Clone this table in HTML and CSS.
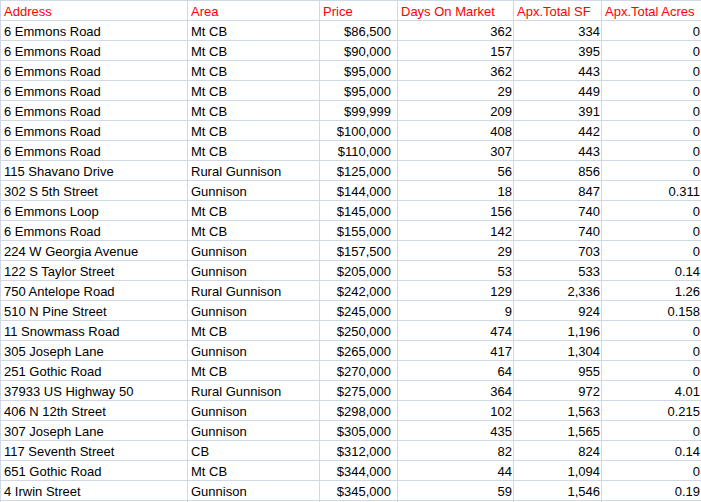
FILE: index.html
```html
<!DOCTYPE html>
<html>
<head>
<meta charset="utf-8">
<link rel="stylesheet" href="styles.css">
</head>
<body>
<table class="sheet">
<colgroup>
<col class="c1"><col class="c2"><col class="c3"><col class="c4"><col class="c5"><col class="c6">
</colgroup>
<thead>
<tr class="head"><td>Address</td><td>Area</td><td>Price</td><td>Days On Market</td><td>Apx.Total SF</td><td>Apx.Total Acres</td></tr>
</thead>
<tbody>
<tr><td>6 Emmons Road</td><td>Mt CB</td><td class="price">$86,500</td><td class="num">362</td><td class="num">334</td><td class="num">0</td></tr>
<tr><td>6 Emmons Road</td><td>Mt CB</td><td class="price">$90,000</td><td class="num">157</td><td class="num">395</td><td class="num">0</td></tr>
<tr><td>6 Emmons Road</td><td>Mt CB</td><td class="price">$95,000</td><td class="num">362</td><td class="num">443</td><td class="num">0</td></tr>
<tr><td>6 Emmons Road</td><td>Mt CB</td><td class="price">$95,000</td><td class="num">29</td><td class="num">449</td><td class="num">0</td></tr>
<tr><td>6 Emmons Road</td><td>Mt CB</td><td class="price">$99,999</td><td class="num">209</td><td class="num">391</td><td class="num">0</td></tr>
<tr><td>6 Emmons Road</td><td>Mt CB</td><td class="price">$100,000</td><td class="num">408</td><td class="num">442</td><td class="num">0</td></tr>
<tr><td>6 Emmons Road</td><td>Mt CB</td><td class="price">$110,000</td><td class="num">307</td><td class="num">443</td><td class="num">0</td></tr>
<tr><td>115 Shavano Drive</td><td>Rural Gunnison</td><td class="price">$125,000</td><td class="num">56</td><td class="num">856</td><td class="num">0</td></tr>
<tr><td>302 S 5th Street</td><td>Gunnison</td><td class="price">$144,000</td><td class="num">18</td><td class="num">847</td><td class="num">0.311</td></tr>
<tr><td>6 Emmons Loop</td><td>Mt CB</td><td class="price">$145,000</td><td class="num">156</td><td class="num">740</td><td class="num">0</td></tr>
<tr><td>6 Emmons Road</td><td>Mt CB</td><td class="price">$155,000</td><td class="num">142</td><td class="num">740</td><td class="num">0</td></tr>
<tr><td>224 W Georgia Avenue</td><td>Gunnison</td><td class="price">$157,500</td><td class="num">29</td><td class="num">703</td><td class="num">0</td></tr>
<tr><td>122 S Taylor Street</td><td>Gunnison</td><td class="price">$205,000</td><td class="num">53</td><td class="num">533</td><td class="num">0.14</td></tr>
<tr><td>750 Antelope Road</td><td>Rural Gunnison</td><td class="price">$242,000</td><td class="num">129</td><td class="num">2,336</td><td class="num">1.26</td></tr>
<tr><td>510 N Pine Street</td><td>Gunnison</td><td class="price">$245,000</td><td class="num">9</td><td class="num">924</td><td class="num">0.158</td></tr>
<tr><td>11 Snowmass Road</td><td>Mt CB</td><td class="price">$250,000</td><td class="num">474</td><td class="num">1,196</td><td class="num">0</td></tr>
<tr><td>305 Joseph Lane</td><td>Gunnison</td><td class="price">$265,000</td><td class="num">417</td><td class="num">1,304</td><td class="num">0</td></tr>
<tr><td>251 Gothic Road</td><td>Mt CB</td><td class="price">$270,000</td><td class="num">64</td><td class="num">955</td><td class="num">0</td></tr>
<tr><td>37933 US Highway 50</td><td>Rural Gunnison</td><td class="price">$275,000</td><td class="num">364</td><td class="num">972</td><td class="num">4.01</td></tr>
<tr><td>406 N 12th Street</td><td>Gunnison</td><td class="price">$298,000</td><td class="num">102</td><td class="num">1,563</td><td class="num">0.215</td></tr>
<tr><td>307 Joseph Lane</td><td>Gunnison</td><td class="price">$305,000</td><td class="num">435</td><td class="num">1,565</td><td class="num">0</td></tr>
<tr><td>117 Seventh Street</td><td>CB</td><td class="price">$312,000</td><td class="num">82</td><td class="num">824</td><td class="num">0.14</td></tr>
<tr><td>651 Gothic Road</td><td>Mt CB</td><td class="price">$344,000</td><td class="num">44</td><td class="num">1,094</td><td class="num">0</td></tr>
<tr><td>4 Irwin Street</td><td>Gunnison</td><td class="price">$345,000</td><td class="num">59</td><td class="num">1,546</td><td class="num">0.19</td></tr>
<tr><td></td><td></td><td></td><td></td><td></td><td></td></tr>
</tbody>
</table>
</body>
</html>
```

FILE: styles.css
```css
html, body {
  margin: 0;
  padding: 0;
  background: #ffffff;
  overflow: hidden;
}
.sheet {
  table-layout: fixed;
  border-collapse: separate;
  border-spacing: 1px;
  background: #d0d7e5;
  width: 702px;
  font-family: "Liberation Sans", Arial, sans-serif;
  font-size: 13px;
  color: #000000;
}
.c1 { width: 186px; }
.c2 { width: 131px; }
.c3 { width: 77px; }
.c4 { width: 115px; }
.c5 { width: 87px; }
.c6 { width: 99px; }
.sheet td {
  background: #ffffff;
  height: 19px;
  box-sizing: border-box;
  padding: 2px 1px 0 3px;
  line-height: 17px;
  white-space: nowrap;
  overflow: hidden;
  vertical-align: top;
}
.head td {
  color: #ff0000;
}
.sheet td.num {
  text-align: right;
}
.sheet td.price {
  text-align: right;
  padding-right: 6px;
}
```
